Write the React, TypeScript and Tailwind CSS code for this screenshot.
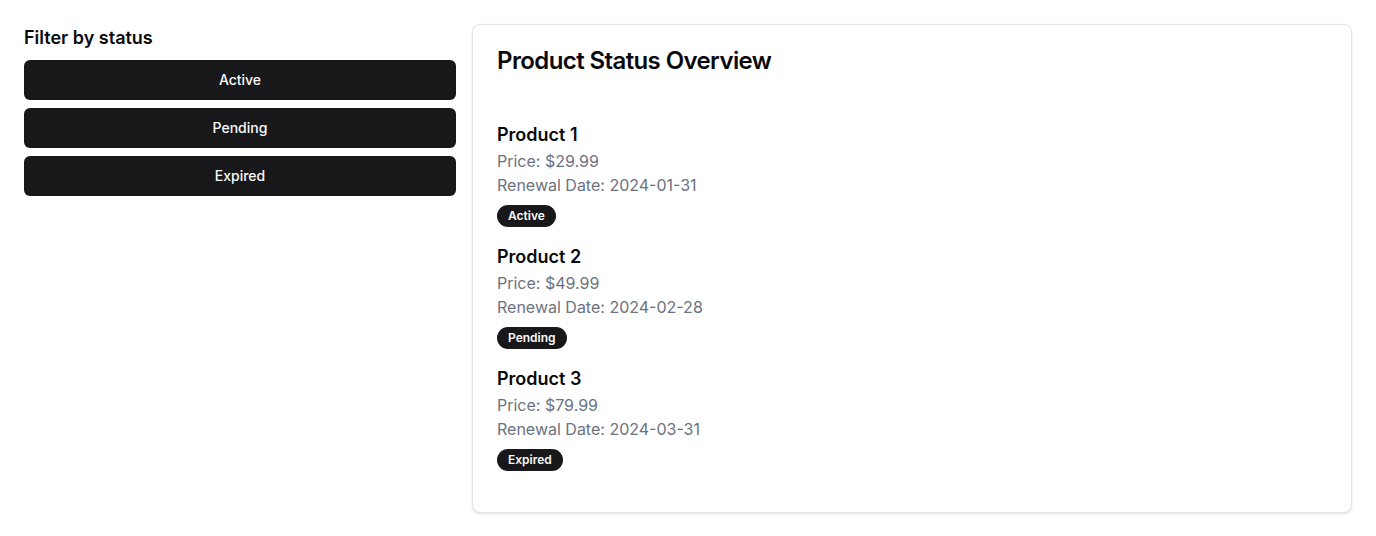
import React from 'react';

const products = [
  { name: 'Product 1', price: '$29.99', renewal: '2024-01-31', status: 'Active' },
  { name: 'Product 2', price: '$49.99', renewal: '2024-02-28', status: 'Pending' },
  { name: 'Product 3', price: '$79.99', renewal: '2024-03-31', status: 'Expired' },
];

const App = () => {
  return (
    <main className="min-h-screen bg-white p-6 text-[#09090b] font-['Inter',sans-serif]">
      <div className="grid grid-cols-3 gap-4">
        {/* Filters */}
        <div>
          <h2 className="text-lg font-semibold mb-2">Filter by status</h2>
          <div className="flex flex-col gap-2">
            {['Active', 'Pending', 'Expired'].map((s) => (
              <button
                key={s}
                className="h-10 w-full rounded-md bg-[#18181b] text-sm font-medium text-[#fafafa]"
              >
                {s}
              </button>
            ))}
          </div>
        </div>

        {/* Overview card */}
        <div className="col-span-2 rounded-lg border border-[#e4e4e7] bg-white shadow-sm">
          <div className="p-6">
            <h1 className="text-2xl font-semibold leading-none tracking-tight">Product Status Overview</h1>
          </div>
          <div className="px-6 pt-6 pb-[25px]">
            {products.map((p) => (
              <div key={p.name} className="mb-4">
                <h3 className="text-lg font-semibold">{p.name}</h3>
                <p className="text-[#6b7280]">Price: {p.price}</p>
                <p className="text-[#6b7280]">Renewal Date: {p.renewal}</p>
                <span className="mt-2 inline-flex items-center rounded-full border border-transparent bg-[#18181b] px-2.5 py-0.5 text-xs font-semibold text-[#fafafa]">
                  {p.status}
                </span>
              </div>
            ))}
          </div>
        </div>
      </div>
    </main>
  );
};

export default App;
